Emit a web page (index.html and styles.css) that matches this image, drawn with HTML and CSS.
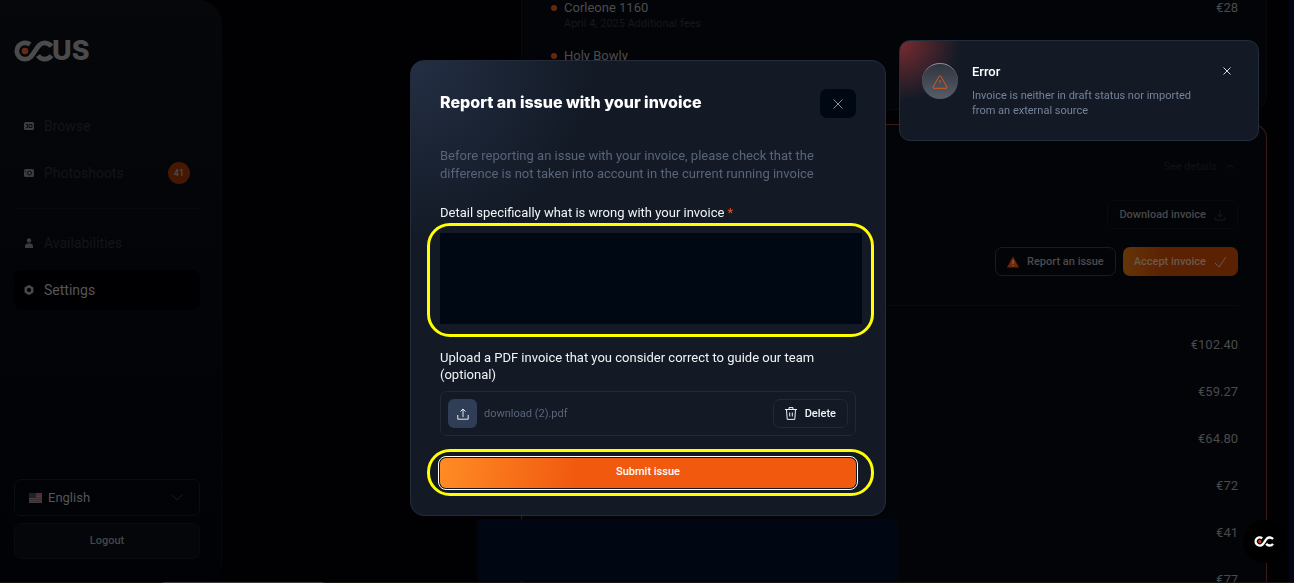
FILE: index.html
```
<!DOCTYPE html>
<html lang="en">
<head>
<meta charset="utf-8">
<title>OCUS – Invoices</title>
<link rel="stylesheet" href="styles.css">
</head>
<body>
<svg class="defs" aria-hidden="true">
  <symbol id="mark" viewBox="0 0 41 22">
    <g fill="none" stroke="currentColor" stroke-width="4.800">
      <path d="M16 4.500A8.200 8.200 0 1 0 16.600 17C20 13.500 22 8.500 25.500 5A8.200 8.200 0 0 1 37.500 6.300"/>
      <path d="M24 15.500A8.200 8.200 0 0 0 37.500 15.700"/>
    </g>
    <circle class="mark-dot" cx="11" cy="11" r="3.300"/>
  </symbol>
</svg>
<div class="app">
  <aside class="sidebar">
    <a class="logo" href="#" aria-label="OCUS">
      <svg class="logo-mark" width="41" height="22"><use href="#mark"/></svg><span class="logo-word">US</span>
    </a>
    <nav class="nav">
      <a class="nav-item" href="#"><svg class="nav-icon" viewBox="0 0 10 10"><rect y="1" width="10" height="8" rx="1.500"/><path class="cut" d="M2 3.500h1.500v3H2M5 3.500h3v3H5z"/></svg>Browse</a>
      <a class="nav-item" href="#"><svg class="nav-icon" viewBox="0 0 10 10"><rect y="1" width="10" height="8" rx="1.500"/><circle class="cut" cx="5.500" cy="5" r="2"/><path class="cut" d="M1.500 3v1"/></svg>Photoshoots<span class="badge">41</span></a>
      <hr class="nav-rule">
      <a class="nav-item" href="#"><svg class="nav-icon" viewBox="0 0 10 10"><circle cx="5" cy="2.500" r="2.200"/><path d="M1 10V8.500Q1 5.500 4 5.500H6Q9 5.500 9 8.500V10z"/></svg>Availabilities</a>
      <a class="nav-item active" href="#"><svg class="nav-icon" viewBox="0 0 10 10"><path class="gear" d="M5 1.300l3.200 1.900v3.600L5 8.700 1.800 6.800V3.200z"/></svg>Settings</a>
    </nav>
    <div class="sidebar-foot">
      <div class="lang">
        <svg class="flag" viewBox="0 0 13 10"><path fill="#4b3a3c" d="M0 0h13v10H0z"/><path stroke="#53242a" d="M0 1.500h13M0 4.500h13M0 6.500h13M0 8.500h13"/><path fill="#1c2230" d="M0 0h7v5H0z"/></svg>
        <select class="lang-select" aria-label="Language"><option>English</option></select>
        <svg class="lang-arrow" viewBox="0 0 12 8"><path d="M1 1l5 5 5-5"/></svg>
      </div>
      <button class="logout">Logout</button>
    </div>
  </aside>

  <main class="content">
    <section class="card fees">
      <div class="fee"><i class="dot"></i><div class="fee-text"><b class="fee-name">Corleone 1160</b><small class="fee-note">April 4, 2025 Additional fees</small></div><span class="price">€28</span></div>
      <div class="fee"><i class="dot"></i><div class="fee-text"><b class="fee-name">Holy Bowly</b></div></div>
    </section>
    <section class="card current">
      <button class="see">See details <svg width="10" height="6" viewBox="0 0 10 6"><path d="M1 5l4-4 4 4"/></svg></button>
      <button class="btn faint">Download invoice <svg width="12" height="12" viewBox="0 0 12 12"><path d="M6 1v7M3.500 5.500L6 8l2.500-2.500M1 8v3h10V8"/></svg></button>
      <div class="actions">
        <button class="btn"><svg class="warn" width="12" height="12" viewBox="0 0 12 12"><path d="M6 .5L12 11.500H0z"/><path class="bang" d="M6 4v4M6 9v1"/></svg>Report an issue</button>
        <button class="btn accept">Accept invoice <svg width="13" height="12" viewBox="0 0 13 12"><path d="M1 7l4 4 7-10"/></svg></button>
      </div>
      <ul class="prices">
        <li>€102.40</li><li>€59.27</li><li>€64.80</li><li>€72</li><li>€41</li><li>€77</li>
      </ul>
    </section>
  </main>
</div>
<div class="panel-shade"></div>
<div class="scroll-line"><div class="scroll-thumb"></div></div>

<div class="overlay">
  <form class="dialog" role="dialog" aria-labelledby="dlg-title">
    <header class="dialog-head">
      <h1 class="dialog-title" id="dlg-title">Report an issue with your invoice</h1>
      <button class="close" type="button" aria-label="Close"><svg width="10" height="10" viewBox="0 0 10 10"><path d="M.5.500l9 9M9.500.500l-9 9"/></svg></button>
    </header>
    <p class="intro">Before reporting an issue with your invoice, please check that the difference is not taken into account in the current running invoice</p>
    <label class="label" for="detail">Detail specifically what is wrong with your invoice <span class="req">*</span></label>
    <div class="ring ring-detail"><textarea class="detail" id="detail"></textarea></div>
    <label class="label" for="upload">Upload a PDF invoice that you consider correct to guide our team (optional)</label>
    <div class="file">
      <button class="upload" id="upload" type="button" aria-label="Upload"><svg width="12" height="12" viewBox="0 0 12 12"><path d="M6 9V1M3.500 3.500L6 1l2.500 2.500M.8 7v4.200h10.400V7"/></svg></button>
      <span class="file-name">download (2).pdf</span>
      <button class="delete" type="button"><svg width="12" height="13" viewBox="0 0 12 13"><path d="M0 2.500h12M4 2.300V.6h4v1.700M1.500 2.500l.7 9.900h7.600l.7-9.900M4.700 5.500v4M7.300 5.500v4"/></svg>Delete</button>
    </div>
    <div class="ring ring-submit"><button class="submit" type="button">Submit issue</button></div>
  </form>
</div>

<div class="toast" role="alert">
  <span class="toast-icon"><svg width="16" height="14" viewBox="0 0 16 14"><path d="M7.200 1.300Q8 .2 8.800 1.300L14.900 12Q15.300 13.200 14 13.300H2Q.7 13.200 1.100 12zM8 5v3.500"/></svg></span>
  <div class="toast-text"><strong class="toast-title">Error</strong><p class="toast-body">Invoice is neither in draft status nor imported from an external source</p></div>
  <button class="toast-close" aria-label="Dismiss"><svg width="8" height="8" viewBox="0 0 8 8"><path d="M.5.500l7 7M7.500.500l-7 7"/></svg></button>
</div>
<button class="chat" aria-label="Open chat"><svg width="21" height="11"><use href="#mark"/></svg></button>
</body>
</html>
```
FILE: styles.css
```
* { box-sizing: border-box; }
body {
  margin: 0;
  height: 100vh;
  overflow: hidden;
  background: #010104;
  color: #4a4a4c;
  font: 13px/18px Roboto, "Liberation Sans", sans-serif;
}
button, select, textarea { font: inherit; color: inherit; margin: 0; }
button { cursor: pointer; }
svg { fill: none; stroke: currentColor; flex: none; }
.defs { position: absolute; width: 0; height: 0; }

.app { display: flex; height: 100vh; border-right: 5px solid #000616; }
.sidebar {
  display: flex;
  flex-direction: column;
  flex: none;
  width: 222px;
  padding: 39px 21px 24px 14px;
  border-right: 1px solid #07080b;
  border-radius: 0 24px 24px 0;
  background: linear-gradient(180deg, #05070b 0%, #020408 45%, #010205 100%);
}
.logo { --dot: #6b2717; display: flex; align-items: center; height: 24px; color: #4b4b4b; text-decoration: none; }
.logo-mark { margin-right: -3px; }
.logo-word { font: 800 27px/24px Inter, sans-serif; }
.mark-dot { fill: var(--dot); stroke: none; }
.nav { display: flex; flex-direction: column; gap: 7px; margin-top: 43px; }
.nav-item {
  display: flex;
  align-items: center;
  gap: 10px;
  height: 40px;
  padding: 0 10px;
  border-radius: 8px;
  color: #12151a;
  font-size: 14px;
  text-decoration: none;
}
.nav-icon { width: 10px; height: 10px; fill: #3a3c40; stroke: none; }
.nav-icon .cut { fill: none; stroke: #0b0d11; }
.nav-icon .gear { fill: none; stroke: #48494b; stroke-width: 2.500; }
.active { background: #000003; color: #555657; }
.badge {
  margin-left: auto;
  width: 22px;
  border-radius: 11px;
  background: #451803;
  color: #4e4a48;
  font-size: 9px;
  font-weight: 600;
  line-height: 22px;
  text-align: center;
}
.nav-rule { width: 100%; height: 1px; margin: 8px 0 7px; border: 0; background: #080a0d; }
.sidebar-foot { display: flex; flex-direction: column; gap: 7px; margin-top: auto; }
.lang { display: grid; align-items: center; }
.lang > * { grid-area: 1 / 1; }
.lang-select {
  appearance: none;
  width: 100%;
  height: 37px;
  padding: 0 33px;
  border: 1px solid #0b0d10;
  border-radius: 7px;
  background: none;
  color: #555657;
}
.flag { width: 13px; height: 10px; margin-left: 15px; stroke: none; }
.lang-arrow { width: 12px; height: 8px; margin-right: 17px; justify-self: end; color: #191b1f; }
.logout {
  height: 36px;
  border: 1px solid #090b0e;
  border-radius: 7px;
  background: #040609;
  color: #464749;
  font-size: 11px;
  font-weight: 500;
}

.content {
  display: flex;
  flex-direction: column;
  gap: 14px;
  flex: 1;
  min-width: 0;
  padding: 0 22px 0 299px;
}
.card { border: 1px solid #08090c; background: #030407; }
.fees {
  display: flex;
  flex-direction: column;
  gap: 16px;
  flex: none;
  height: 110px;
  padding: 0 28px 0 29px;
  border-top: 0;
  border-radius: 0 0 14px 14px;
}
.fee { display: flex; gap: 7px; }
.dot { width: 6px; height: 6px; margin-top: 5px; border-radius: 50%; background: #66270c; }
.fee-text { display: flex; flex-direction: column; flex: 1; }
.fee-name { color: #4c4c4e; font-weight: 400; line-height: 16px; }
.fee-note { color: #14181f; font-size: 11px; line-height: 16px; }
.price { line-height: 16px; }
.current {
  display: flex;
  flex-direction: column;
  align-items: flex-end;
  flex: 1;
  padding: 33px 28px 0;
  border: 1px solid #391c17;
  border-bottom: 0;
  border-radius: 14px 14px 0 0;
}
.see {
  display: flex;
  align-items: center;
  gap: 8px;
  padding: 0 3px 0 0;
  border: 0;
  background: none;
  color: #101216;
  font-size: 11px;
  line-height: 18px;
}
.btn {
  display: flex;
  align-items: center;
  gap: 8px;
  height: 29px;
  padding: 0 11px;
  border: 1px solid #1a1b1e;
  border-radius: 7px;
  background: none;
  color: #4a4b4d;
  font-size: 11px;
  font-weight: 500;
}
.faint { margin-top: 24px; border-color: #090a0d; color: #47484a; }
.faint svg { color: #15171a; }
.actions { display: flex; gap: 7px; margin-top: 18px; }
.warn { fill: #6d2808; stroke: none; }
.warn .bang { stroke: #a07058; }
.accept { border: 0; background: linear-gradient(90deg, #653507, #5b2103 35%); color: #6b5a4c; }
.prices {
  display: flex;
  flex-direction: column;
  gap: 16px;
  align-self: stretch;
  margin: 29px 0 0;
  padding: 23px 0 0;
  border-top: 1px solid #090a0d;
  line-height: 31px;
  list-style: none;
  text-align: right;
}

/* Floating layers above the page */
.panel-shade { position: fixed; left: 477px; right: 396px; bottom: 2px; height: 62px; background: #000713; }
.scroll-line { position: fixed; inset: auto 0 0; height: 1px; background: #17170f; }
.scroll-thumb { width: 160px; height: 1px; margin-left: 163px; background: #3c3c3c; }
.overlay {
  position: fixed;
  inset: 0;
  display: flex;
  justify-content: center;
  align-items: flex-start;
  padding: 60px 16px 0 18px;
}
.dialog {
  display: flex;
  flex-direction: column;
  width: 476px;
  padding: 28px 29px 27px;
  border: 1px solid #242c3a;
  border-radius: 14px;
  background: radial-gradient(circle at 0 0, #232f44, #131a26 180px) #131a26;
}
.dialog-head { display: flex; justify-content: space-between; align-items: flex-start; }
.dialog-title { margin: 0; color: #fff; font: 800 16px/26px Inter, sans-serif; }
.close {
  display: grid;
  place-items: center;
  width: 36px;
  height: 29px;
  padding: 0;
  border: 0;
  border-radius: 7px;
  background: #000814;
  color: #8490a5;
}
.intro { margin: 29px 0 21px; color: #59647b; }
.label { color: #f1f3f6; line-height: 17px; }
.req { color: #f0551a; }
.ring { position: relative; }
.ring::after { content: ""; position: absolute; border: 3px solid #ff0; border-radius: 23px; pointer-events: none; }
.ring-detail { margin: 12px -6px 25px 0; }
.ring-detail::after { inset: -10px -12px -13px -13px; }
.ring-submit { margin-top: 22px; }
.ring-submit::after { inset: -9px -18px -8px -13px; }
.detail { display: block; width: 100%; height: 91px; padding: 8px; border: 0; outline: 0; background: #000814; resize: none; }
.file {
  display: flex;
  align-items: center;
  gap: 7px;
  margin-top: 8px;
  padding: 7px;
  border: 1px solid #222a38;
  border-radius: 7px;
}
.upload {
  display: grid;
  place-items: center;
  width: 29px;
  height: 29px;
  padding: 0;
  border: 0;
  border-radius: 6px;
  background: #303d56;
  color: #e6eaf0;
}
.file-name { flex: 1; color: #59647b; font-size: 11px; }
.delete {
  display: flex;
  align-items: center;
  gap: 8px;
  height: 29px;
  padding: 0 11px;
  border: 1px solid #222a38;
  border-radius: 7px;
  background: none;
  color: #f1f3f6;
  font-size: 11px;
  font-weight: 500;
}
.submit {
  display: block;
  width: 100%;
  height: 30px;
  padding: 0 0 3px;
  border: 0;
  border-radius: 6px;
  outline: 1px solid #fff;
  outline-offset: 1px;
  background: linear-gradient(100deg, #ff8c25, #f1590f 33%);
  color: #fff;
  font-size: 11px;
  font-weight: 500;
}
.toast {
  position: fixed;
  top: 40px;
  right: 35px;
  display: flex;
  align-items: flex-start;
  gap: 14px;
  width: 360px;
  padding: 22px 27px 22px 22px;
  border: 1px solid #242d3b;
  border-radius: 11px;
  background: radial-gradient(circle at 0 0, #792c30, #131a26 60px) #131a26;
}
.toast-icon {
  display: grid;
  place-items: center;
  flex: none;
  width: 36px;
  height: 36px;
  border-top: 1px solid #8b8f96;
  border-radius: 50%;
  background: linear-gradient(#30343f, #575e67);
  color: #d9571f;
}
.toast-text { flex: 1; }
.toast-title { display: block; color: #fff; font-weight: 500; line-height: 18px; }
.toast-body { max-width: 224px; margin: 7px 0 0; color: #76829a; font-size: 11px; line-height: 15px; }
.toast-close { display: flex; margin-top: 4px; padding: 0; border: 0; background: none; color: #d5d9df; }
.chat {
  --dot: #c9402a;
  position: fixed;
  right: 8px;
  bottom: 20px;
  display: grid;
  place-items: center;
  width: 43px;
  height: 43px;
  padding: 0;
  border: 0;
  border-radius: 50%;
  background: #000;
  color: #fff;
}
```
